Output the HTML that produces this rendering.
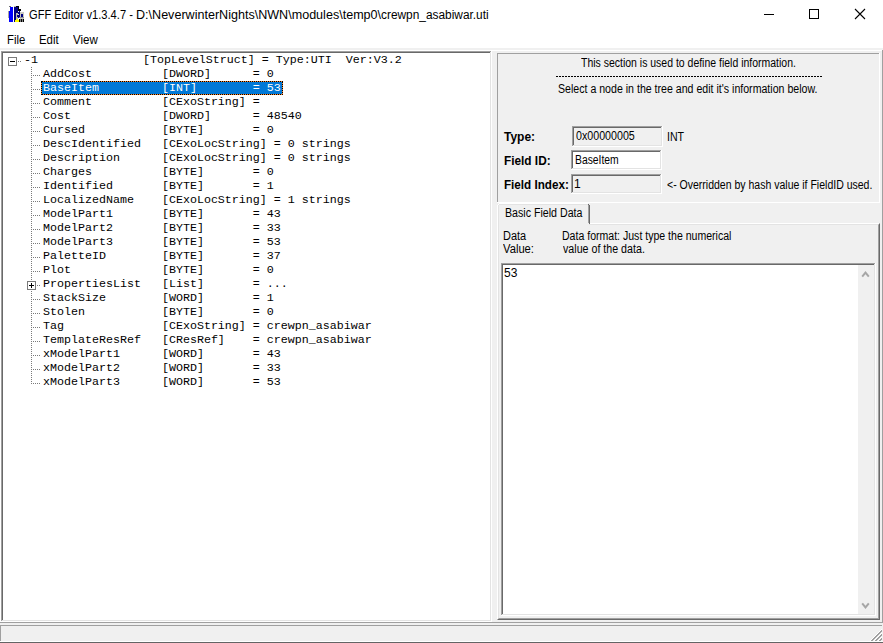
<!DOCTYPE html>
<html><head><meta charset="utf-8">
<style>
*{margin:0;padding:0;box-sizing:border-box}
html,body{width:883px;height:643px;overflow:hidden;background:#fff;position:relative;font-family:"Liberation Sans",sans-serif;color:#000}
.a{position:absolute}
.t{position:absolute;white-space:pre;line-height:1}
.sunken{position:absolute;border-top:1px solid #a0a0a0;border-left:1px solid #a0a0a0;border-right:1px solid #fff;border-bottom:1px solid #fff}
.sunken>.in{position:absolute;left:0;top:0;right:0;bottom:0;border-top:1px solid #696969;border-left:1px solid #696969;border-right:1px solid #e3e3e3;border-bottom:1px solid #e3e3e3}
.tree{font-family:"Liberation Mono",monospace;font-size:11.667px}
.row{position:absolute;height:14px;white-space:pre;line-height:14px}
.selo{position:absolute;background:#ff8728;height:14px}
.sel{background:#0078d7;background-clip:padding-box;color:#fff;padding-left:1px;border:1px dotted #000;line-height:12px;padding-top:0}
.ps{font-size:12px;transform-origin:0 0}
</style></head><body>
<!-- title bar -->
<svg class="a" style="left:8px;top:6px" width="16" height="16" viewBox="0 0 16 16" shape-rendering="crispEdges">
<rect x="0" y="5" width="1" height="7" fill="#a8a8a0"/>
<rect x="1" y="0" width="2" height="1" fill="#707070"/>
<rect x="2" y="1" width="3" height="15" fill="#0000ff"/>
<rect x="1" y="5" width="1" height="11" fill="#0000ff"/>
<rect x="6" y="0" width="2" height="1" fill="#c0c0b0"/>
<rect x="6" y="1" width="4" height="15" fill="#000080"/>
<rect x="8" y="0" width="3" height="1" fill="#000"/>
<rect x="10" y="1" width="1" height="4" fill="#000"/>
<rect x="11" y="3" width="2" height="2" fill="#000"/>
<rect x="10" y="5" width="2" height="7" fill="#000080"/>
<rect x="10" y="5" width="1" height="1" fill="#e0e0ff"/>
<rect x="10" y="8" width="1" height="1" fill="#e0e0ff"/>
<rect x="8" y="7" width="2" height="6" fill="#b8b8b0"/>
<rect x="9" y="9" width="1" height="2" fill="#000080"/>
<rect x="12" y="6" width="4" height="7" fill="#c8c8c0"/>
<rect x="13" y="8" width="2" height="3" fill="#000080"/>
<rect x="11" y="11" width="5" height="1" fill="#909090"/>
<rect x="7" y="14" width="4" height="2" fill="#ffff00"/>
<rect x="8" y="13" width="2" height="1" fill="#ffff00"/>
<rect x="11" y="13" width="5" height="3" fill="#808080"/>
<rect x="11" y="13" width="1" height="3" fill="#000"/>
<rect x="13" y="13" width="1" height="3" fill="#000"/>
<rect x="15" y="13" width="1" height="3" fill="#000"/>
</svg>
<div id="ttl1" class="t" style="left:29px;top:9px;font-size:12px;transform-origin:0 0;transform:scaleX(0.927)">GFF Editor v1.3.4.7 -</div>
<div id="ttl2" class="t" style="left:136px;top:9px;font-size:12px;transform-origin:0 0;transform:scaleX(1.047)">D:\NeverwinterNights\NWN\modules\temp0\</div>
<div id="ttl3" class="t" style="left:381px;top:9px;font-size:12px;transform-origin:0 0;transform:scaleX(0.99)">crewpn_asabiwar.uti</div>
<div class="a" style="left:764px;top:14px;width:10px;height:1px;background:#000"></div>
<div class="a" style="left:809px;top:9px;width:10px;height:10px;border:1px solid #000"></div>
<svg class="a" style="left:854px;top:8px" width="12" height="12" viewBox="0 0 12 12"><path d="M1 1L11 11M11 1L1 11" stroke="#000" stroke-width="1.1"/></svg>
<!-- menu -->
<div id="mf" class="t" style="left:7px;top:34px;font-size:12px;transform-origin:0 0;transform:scaleX(0.944)">File</div>
<div id="me" class="t" style="left:39px;top:34px;font-size:12px;transform-origin:0 0;transform:scaleX(0.95)">Edit</div>
<div id="mv" class="t" style="left:73px;top:34px;font-size:12px;transform-origin:0 0;transform:scaleX(0.96)">View</div>
<div class="a" style="left:0;top:48px;width:883px;height:2px;background:#f0f0f0"></div>
<!-- client bg -->
<div class="a" style="left:492px;top:51px;width:390px;height:571px;background:#f0f0f0"></div>
<div class="a" style="left:882px;top:50px;width:1px;height:573px;background:#a0a0a0"></div>
<div class="a" style="left:0;top:622px;width:883px;height:1px;background:#a0a0a0"></div>
<div class="a" style="left:0;top:623px;width:883px;height:2px;background:#f0f0f0"></div>
<!-- tree -->
<div class="a" style="left:1px;top:51px;width:491px;height:571px;background:#fff"></div>
<div class="a" style="left:1px;top:51px;width:490px;height:1px;background:#a0a0a0"></div>
<div class="a" style="left:1px;top:51px;width:1px;height:570px;background:#a0a0a0"></div>
<div class="a" style="left:1px;top:621px;width:491px;height:1px;background:#fff"></div>
<div class="a" style="left:491px;top:51px;width:1px;height:571px;background:#fff"></div>
<div class="a" style="left:2px;top:52px;width:488px;height:1px;background:#696969"></div>
<div class="a" style="left:2px;top:52px;width:1px;height:568px;background:#696969"></div>
<div class="a" style="left:2px;top:620px;width:489px;height:1px;background:#e3e3e3"></div>
<div class="a" style="left:490px;top:52px;width:1px;height:569px;background:#e3e3e3"></div>
<!--TREE-->
<div class="a tree" style="left:0;top:0;width:492px;height:622px">
<svg class="a" style="left:0;top:0" width="492" height="400" shape-rendering="crispEdges"><rect x="8.5" y="57.5" width="8" height="8" fill="#fff" stroke="#7a7a7a" stroke-width="1"/><rect x="10" y="61" width="5" height="1" fill="#000"/><rect x="18" y="61" width="1" height="1" fill="#7a7a7a"/><rect x="20" y="61" width="1" height="1" fill="#7a7a7a"/><rect x="31" y="67" width="1" height="1" fill="#7a7a7a"/><rect x="31" y="69" width="1" height="1" fill="#7a7a7a"/><rect x="31" y="71" width="1" height="1" fill="#7a7a7a"/><rect x="31" y="73" width="1" height="1" fill="#7a7a7a"/><rect x="31" y="75" width="1" height="1" fill="#7a7a7a"/><rect x="31" y="77" width="1" height="1" fill="#7a7a7a"/><rect x="31" y="79" width="1" height="1" fill="#7a7a7a"/><rect x="31" y="81" width="1" height="1" fill="#7a7a7a"/><rect x="31" y="83" width="1" height="1" fill="#7a7a7a"/><rect x="31" y="85" width="1" height="1" fill="#7a7a7a"/><rect x="31" y="87" width="1" height="1" fill="#7a7a7a"/><rect x="31" y="89" width="1" height="1" fill="#7a7a7a"/><rect x="31" y="91" width="1" height="1" fill="#7a7a7a"/><rect x="31" y="93" width="1" height="1" fill="#7a7a7a"/><rect x="31" y="95" width="1" height="1" fill="#7a7a7a"/><rect x="31" y="97" width="1" height="1" fill="#7a7a7a"/><rect x="31" y="99" width="1" height="1" fill="#7a7a7a"/><rect x="31" y="101" width="1" height="1" fill="#7a7a7a"/><rect x="31" y="103" width="1" height="1" fill="#7a7a7a"/><rect x="31" y="105" width="1" height="1" fill="#7a7a7a"/><rect x="31" y="107" width="1" height="1" fill="#7a7a7a"/><rect x="31" y="109" width="1" height="1" fill="#7a7a7a"/><rect x="31" y="111" width="1" height="1" fill="#7a7a7a"/><rect x="31" y="113" width="1" height="1" fill="#7a7a7a"/><rect x="31" y="115" width="1" height="1" fill="#7a7a7a"/><rect x="31" y="117" width="1" height="1" fill="#7a7a7a"/><rect x="31" y="119" width="1" height="1" fill="#7a7a7a"/><rect x="31" y="121" width="1" height="1" fill="#7a7a7a"/><rect x="31" y="123" width="1" height="1" fill="#7a7a7a"/><rect x="31" y="125" width="1" height="1" fill="#7a7a7a"/><rect x="31" y="127" width="1" height="1" fill="#7a7a7a"/><rect x="31" y="129" width="1" height="1" fill="#7a7a7a"/><rect x="31" y="131" width="1" height="1" fill="#7a7a7a"/><rect x="31" y="133" width="1" height="1" fill="#7a7a7a"/><rect x="31" y="135" width="1" height="1" fill="#7a7a7a"/><rect x="31" y="137" width="1" height="1" fill="#7a7a7a"/><rect x="31" y="139" width="1" height="1" fill="#7a7a7a"/><rect x="31" y="141" width="1" height="1" fill="#7a7a7a"/><rect x="31" y="143" width="1" height="1" fill="#7a7a7a"/><rect x="31" y="145" width="1" height="1" fill="#7a7a7a"/><rect x="31" y="147" width="1" height="1" fill="#7a7a7a"/><rect x="31" y="149" width="1" height="1" fill="#7a7a7a"/><rect x="31" y="151" width="1" height="1" fill="#7a7a7a"/><rect x="31" y="153" width="1" height="1" fill="#7a7a7a"/><rect x="31" y="155" width="1" height="1" fill="#7a7a7a"/><rect x="31" y="157" width="1" height="1" fill="#7a7a7a"/><rect x="31" y="159" width="1" height="1" fill="#7a7a7a"/><rect x="31" y="161" width="1" height="1" fill="#7a7a7a"/><rect x="31" y="163" width="1" height="1" fill="#7a7a7a"/><rect x="31" y="165" width="1" height="1" fill="#7a7a7a"/><rect x="31" y="167" width="1" height="1" fill="#7a7a7a"/><rect x="31" y="169" width="1" height="1" fill="#7a7a7a"/><rect x="31" y="171" width="1" height="1" fill="#7a7a7a"/><rect x="31" y="173" width="1" height="1" fill="#7a7a7a"/><rect x="31" y="175" width="1" height="1" fill="#7a7a7a"/><rect x="31" y="177" width="1" height="1" fill="#7a7a7a"/><rect x="31" y="179" width="1" height="1" fill="#7a7a7a"/><rect x="31" y="181" width="1" height="1" fill="#7a7a7a"/><rect x="31" y="183" width="1" height="1" fill="#7a7a7a"/><rect x="31" y="185" width="1" height="1" fill="#7a7a7a"/><rect x="31" y="187" width="1" height="1" fill="#7a7a7a"/><rect x="31" y="189" width="1" height="1" fill="#7a7a7a"/><rect x="31" y="191" width="1" height="1" fill="#7a7a7a"/><rect x="31" y="193" width="1" height="1" fill="#7a7a7a"/><rect x="31" y="195" width="1" height="1" fill="#7a7a7a"/><rect x="31" y="197" width="1" height="1" fill="#7a7a7a"/><rect x="31" y="199" width="1" height="1" fill="#7a7a7a"/><rect x="31" y="201" width="1" height="1" fill="#7a7a7a"/><rect x="31" y="203" width="1" height="1" fill="#7a7a7a"/><rect x="31" y="205" width="1" height="1" fill="#7a7a7a"/><rect x="31" y="207" width="1" height="1" fill="#7a7a7a"/><rect x="31" y="209" width="1" height="1" fill="#7a7a7a"/><rect x="31" y="211" width="1" height="1" fill="#7a7a7a"/><rect x="31" y="213" width="1" height="1" fill="#7a7a7a"/><rect x="31" y="215" width="1" height="1" fill="#7a7a7a"/><rect x="31" y="217" width="1" height="1" fill="#7a7a7a"/><rect x="31" y="219" width="1" height="1" fill="#7a7a7a"/><rect x="31" y="221" width="1" height="1" fill="#7a7a7a"/><rect x="31" y="223" width="1" height="1" fill="#7a7a7a"/><rect x="31" y="225" width="1" height="1" fill="#7a7a7a"/><rect x="31" y="227" width="1" height="1" fill="#7a7a7a"/><rect x="31" y="229" width="1" height="1" fill="#7a7a7a"/><rect x="31" y="231" width="1" height="1" fill="#7a7a7a"/><rect x="31" y="233" width="1" height="1" fill="#7a7a7a"/><rect x="31" y="235" width="1" height="1" fill="#7a7a7a"/><rect x="31" y="237" width="1" height="1" fill="#7a7a7a"/><rect x="31" y="239" width="1" height="1" fill="#7a7a7a"/><rect x="31" y="241" width="1" height="1" fill="#7a7a7a"/><rect x="31" y="243" width="1" height="1" fill="#7a7a7a"/><rect x="31" y="245" width="1" height="1" fill="#7a7a7a"/><rect x="31" y="247" width="1" height="1" fill="#7a7a7a"/><rect x="31" y="249" width="1" height="1" fill="#7a7a7a"/><rect x="31" y="251" width="1" height="1" fill="#7a7a7a"/><rect x="31" y="253" width="1" height="1" fill="#7a7a7a"/><rect x="31" y="255" width="1" height="1" fill="#7a7a7a"/><rect x="31" y="257" width="1" height="1" fill="#7a7a7a"/><rect x="31" y="259" width="1" height="1" fill="#7a7a7a"/><rect x="31" y="261" width="1" height="1" fill="#7a7a7a"/><rect x="31" y="263" width="1" height="1" fill="#7a7a7a"/><rect x="31" y="265" width="1" height="1" fill="#7a7a7a"/><rect x="31" y="267" width="1" height="1" fill="#7a7a7a"/><rect x="31" y="269" width="1" height="1" fill="#7a7a7a"/><rect x="31" y="271" width="1" height="1" fill="#7a7a7a"/><rect x="31" y="273" width="1" height="1" fill="#7a7a7a"/><rect x="31" y="275" width="1" height="1" fill="#7a7a7a"/><rect x="31" y="277" width="1" height="1" fill="#7a7a7a"/><rect x="31" y="279" width="1" height="1" fill="#7a7a7a"/><rect x="31" y="291" width="1" height="1" fill="#7a7a7a"/><rect x="31" y="293" width="1" height="1" fill="#7a7a7a"/><rect x="31" y="295" width="1" height="1" fill="#7a7a7a"/><rect x="31" y="297" width="1" height="1" fill="#7a7a7a"/><rect x="31" y="299" width="1" height="1" fill="#7a7a7a"/><rect x="31" y="301" width="1" height="1" fill="#7a7a7a"/><rect x="31" y="303" width="1" height="1" fill="#7a7a7a"/><rect x="31" y="305" width="1" height="1" fill="#7a7a7a"/><rect x="31" y="307" width="1" height="1" fill="#7a7a7a"/><rect x="31" y="309" width="1" height="1" fill="#7a7a7a"/><rect x="31" y="311" width="1" height="1" fill="#7a7a7a"/><rect x="31" y="313" width="1" height="1" fill="#7a7a7a"/><rect x="31" y="315" width="1" height="1" fill="#7a7a7a"/><rect x="31" y="317" width="1" height="1" fill="#7a7a7a"/><rect x="31" y="319" width="1" height="1" fill="#7a7a7a"/><rect x="31" y="321" width="1" height="1" fill="#7a7a7a"/><rect x="31" y="323" width="1" height="1" fill="#7a7a7a"/><rect x="31" y="325" width="1" height="1" fill="#7a7a7a"/><rect x="31" y="327" width="1" height="1" fill="#7a7a7a"/><rect x="31" y="329" width="1" height="1" fill="#7a7a7a"/><rect x="31" y="331" width="1" height="1" fill="#7a7a7a"/><rect x="31" y="333" width="1" height="1" fill="#7a7a7a"/><rect x="31" y="335" width="1" height="1" fill="#7a7a7a"/><rect x="31" y="337" width="1" height="1" fill="#7a7a7a"/><rect x="31" y="339" width="1" height="1" fill="#7a7a7a"/><rect x="31" y="341" width="1" height="1" fill="#7a7a7a"/><rect x="31" y="343" width="1" height="1" fill="#7a7a7a"/><rect x="31" y="345" width="1" height="1" fill="#7a7a7a"/><rect x="31" y="347" width="1" height="1" fill="#7a7a7a"/><rect x="31" y="349" width="1" height="1" fill="#7a7a7a"/><rect x="31" y="351" width="1" height="1" fill="#7a7a7a"/><rect x="31" y="353" width="1" height="1" fill="#7a7a7a"/><rect x="31" y="355" width="1" height="1" fill="#7a7a7a"/><rect x="31" y="357" width="1" height="1" fill="#7a7a7a"/><rect x="31" y="359" width="1" height="1" fill="#7a7a7a"/><rect x="31" y="361" width="1" height="1" fill="#7a7a7a"/><rect x="31" y="363" width="1" height="1" fill="#7a7a7a"/><rect x="31" y="365" width="1" height="1" fill="#7a7a7a"/><rect x="31" y="367" width="1" height="1" fill="#7a7a7a"/><rect x="31" y="369" width="1" height="1" fill="#7a7a7a"/><rect x="31" y="371" width="1" height="1" fill="#7a7a7a"/><rect x="31" y="373" width="1" height="1" fill="#7a7a7a"/><rect x="31" y="375" width="1" height="1" fill="#7a7a7a"/><rect x="31" y="377" width="1" height="1" fill="#7a7a7a"/><rect x="31" y="379" width="1" height="1" fill="#7a7a7a"/><rect x="31" y="381" width="1" height="1" fill="#7a7a7a"/><rect x="31" y="383" width="1" height="1" fill="#7a7a7a"/><rect x="33" y="75" width="1" height="1" fill="#7a7a7a"/><rect x="35" y="75" width="1" height="1" fill="#7a7a7a"/><rect x="37" y="75" width="1" height="1" fill="#7a7a7a"/><rect x="39" y="75" width="1" height="1" fill="#7a7a7a"/><rect x="33" y="89" width="1" height="1" fill="#7a7a7a"/><rect x="35" y="89" width="1" height="1" fill="#7a7a7a"/><rect x="37" y="89" width="1" height="1" fill="#7a7a7a"/><rect x="39" y="89" width="1" height="1" fill="#7a7a7a"/><rect x="33" y="103" width="1" height="1" fill="#7a7a7a"/><rect x="35" y="103" width="1" height="1" fill="#7a7a7a"/><rect x="37" y="103" width="1" height="1" fill="#7a7a7a"/><rect x="39" y="103" width="1" height="1" fill="#7a7a7a"/><rect x="33" y="117" width="1" height="1" fill="#7a7a7a"/><rect x="35" y="117" width="1" height="1" fill="#7a7a7a"/><rect x="37" y="117" width="1" height="1" fill="#7a7a7a"/><rect x="39" y="117" width="1" height="1" fill="#7a7a7a"/><rect x="33" y="131" width="1" height="1" fill="#7a7a7a"/><rect x="35" y="131" width="1" height="1" fill="#7a7a7a"/><rect x="37" y="131" width="1" height="1" fill="#7a7a7a"/><rect x="39" y="131" width="1" height="1" fill="#7a7a7a"/><rect x="33" y="145" width="1" height="1" fill="#7a7a7a"/><rect x="35" y="145" width="1" height="1" fill="#7a7a7a"/><rect x="37" y="145" width="1" height="1" fill="#7a7a7a"/><rect x="39" y="145" width="1" height="1" fill="#7a7a7a"/><rect x="33" y="159" width="1" height="1" fill="#7a7a7a"/><rect x="35" y="159" width="1" height="1" fill="#7a7a7a"/><rect x="37" y="159" width="1" height="1" fill="#7a7a7a"/><rect x="39" y="159" width="1" height="1" fill="#7a7a7a"/><rect x="33" y="173" width="1" height="1" fill="#7a7a7a"/><rect x="35" y="173" width="1" height="1" fill="#7a7a7a"/><rect x="37" y="173" width="1" height="1" fill="#7a7a7a"/><rect x="39" y="173" width="1" height="1" fill="#7a7a7a"/><rect x="33" y="187" width="1" height="1" fill="#7a7a7a"/><rect x="35" y="187" width="1" height="1" fill="#7a7a7a"/><rect x="37" y="187" width="1" height="1" fill="#7a7a7a"/><rect x="39" y="187" width="1" height="1" fill="#7a7a7a"/><rect x="33" y="201" width="1" height="1" fill="#7a7a7a"/><rect x="35" y="201" width="1" height="1" fill="#7a7a7a"/><rect x="37" y="201" width="1" height="1" fill="#7a7a7a"/><rect x="39" y="201" width="1" height="1" fill="#7a7a7a"/><rect x="33" y="215" width="1" height="1" fill="#7a7a7a"/><rect x="35" y="215" width="1" height="1" fill="#7a7a7a"/><rect x="37" y="215" width="1" height="1" fill="#7a7a7a"/><rect x="39" y="215" width="1" height="1" fill="#7a7a7a"/><rect x="33" y="229" width="1" height="1" fill="#7a7a7a"/><rect x="35" y="229" width="1" height="1" fill="#7a7a7a"/><rect x="37" y="229" width="1" height="1" fill="#7a7a7a"/><rect x="39" y="229" width="1" height="1" fill="#7a7a7a"/><rect x="33" y="243" width="1" height="1" fill="#7a7a7a"/><rect x="35" y="243" width="1" height="1" fill="#7a7a7a"/><rect x="37" y="243" width="1" height="1" fill="#7a7a7a"/><rect x="39" y="243" width="1" height="1" fill="#7a7a7a"/><rect x="33" y="257" width="1" height="1" fill="#7a7a7a"/><rect x="35" y="257" width="1" height="1" fill="#7a7a7a"/><rect x="37" y="257" width="1" height="1" fill="#7a7a7a"/><rect x="39" y="257" width="1" height="1" fill="#7a7a7a"/><rect x="33" y="271" width="1" height="1" fill="#7a7a7a"/><rect x="35" y="271" width="1" height="1" fill="#7a7a7a"/><rect x="37" y="271" width="1" height="1" fill="#7a7a7a"/><rect x="39" y="271" width="1" height="1" fill="#7a7a7a"/><rect x="27.5" y="281.5" width="8" height="8" fill="#fff" stroke="#7a7a7a" stroke-width="1"/><rect x="29" y="285" width="5" height="1" fill="#000"/><rect x="31" y="283" width="1" height="5" fill="#000"/><rect x="37" y="285" width="1" height="1" fill="#7a7a7a"/><rect x="39" y="285" width="1" height="1" fill="#7a7a7a"/><rect x="33" y="299" width="1" height="1" fill="#7a7a7a"/><rect x="35" y="299" width="1" height="1" fill="#7a7a7a"/><rect x="37" y="299" width="1" height="1" fill="#7a7a7a"/><rect x="39" y="299" width="1" height="1" fill="#7a7a7a"/><rect x="33" y="313" width="1" height="1" fill="#7a7a7a"/><rect x="35" y="313" width="1" height="1" fill="#7a7a7a"/><rect x="37" y="313" width="1" height="1" fill="#7a7a7a"/><rect x="39" y="313" width="1" height="1" fill="#7a7a7a"/><rect x="33" y="327" width="1" height="1" fill="#7a7a7a"/><rect x="35" y="327" width="1" height="1" fill="#7a7a7a"/><rect x="37" y="327" width="1" height="1" fill="#7a7a7a"/><rect x="39" y="327" width="1" height="1" fill="#7a7a7a"/><rect x="33" y="341" width="1" height="1" fill="#7a7a7a"/><rect x="35" y="341" width="1" height="1" fill="#7a7a7a"/><rect x="37" y="341" width="1" height="1" fill="#7a7a7a"/><rect x="39" y="341" width="1" height="1" fill="#7a7a7a"/><rect x="33" y="355" width="1" height="1" fill="#7a7a7a"/><rect x="35" y="355" width="1" height="1" fill="#7a7a7a"/><rect x="37" y="355" width="1" height="1" fill="#7a7a7a"/><rect x="39" y="355" width="1" height="1" fill="#7a7a7a"/><rect x="33" y="369" width="1" height="1" fill="#7a7a7a"/><rect x="35" y="369" width="1" height="1" fill="#7a7a7a"/><rect x="37" y="369" width="1" height="1" fill="#7a7a7a"/><rect x="39" y="369" width="1" height="1" fill="#7a7a7a"/><rect x="33" y="383" width="1" height="1" fill="#7a7a7a"/><rect x="35" y="383" width="1" height="1" fill="#7a7a7a"/><rect x="37" y="383" width="1" height="1" fill="#7a7a7a"/><rect x="39" y="383" width="1" height="1" fill="#7a7a7a"/></svg>
<div class="row" style="left:24px;top:53px">-1               [TopLevelStruct] = Type:UTI  Ver:V3.2</div>
<div class="row" style="left:43px;top:67px">AddCost          [DWORD]      = 0</div>
<div class="selo" style="left:41px;top:81px;width:242px"></div><div class="row sel" style="left:41px;top:81px;width:242px">BaseItem         [INT]        = 53</div>
<div class="row" style="left:43px;top:95px">Comment          [CExoString] =</div>
<div class="row" style="left:43px;top:109px">Cost             [DWORD]      = 48540</div>
<div class="row" style="left:43px;top:123px">Cursed           [BYTE]       = 0</div>
<div class="row" style="left:43px;top:137px">DescIdentified   [CExoLocString] = 0 strings</div>
<div class="row" style="left:43px;top:151px">Description      [CExoLocString] = 0 strings</div>
<div class="row" style="left:43px;top:165px">Charges          [BYTE]       = 0</div>
<div class="row" style="left:43px;top:179px">Identified       [BYTE]       = 1</div>
<div class="row" style="left:43px;top:193px">LocalizedName    [CExoLocString] = 1 strings</div>
<div class="row" style="left:43px;top:207px">ModelPart1       [BYTE]       = 43</div>
<div class="row" style="left:43px;top:221px">ModelPart2       [BYTE]       = 33</div>
<div class="row" style="left:43px;top:235px">ModelPart3       [BYTE]       = 53</div>
<div class="row" style="left:43px;top:249px">PaletteID        [BYTE]       = 37</div>
<div class="row" style="left:43px;top:263px">Plot             [BYTE]       = 0</div>
<div class="row" style="left:43px;top:277px">PropertiesList   [List]       = ...</div>
<div class="row" style="left:43px;top:291px">StackSize        [WORD]       = 1</div>
<div class="row" style="left:43px;top:305px">Stolen           [BYTE]       = 0</div>
<div class="row" style="left:43px;top:319px">Tag              [CExoString] = crewpn_asabiwar</div>
<div class="row" style="left:43px;top:333px">TemplateResRef   [CResRef]    = crewpn_asabiwar</div>
<div class="row" style="left:43px;top:347px">xModelPart1      [WORD]       = 43</div>
<div class="row" style="left:43px;top:361px">xModelPart2      [WORD]       = 33</div>
<div class="row" style="left:43px;top:375px">xModelPart3      [WORD]       = 53</div>
</div>
<!--/TREE-->
<!-- right pane top static -->
<div class="a" style="left:497px;top:53px;width:382px;height:1px;background:#a0a0a0"></div>
<div class="a" style="left:497px;top:53px;width:1px;height:149px;background:#a0a0a0"></div>
<div class="a" style="left:497px;top:202px;width:383px;height:1px;background:#fff"></div>
<div class="a" style="left:879px;top:53px;width:1px;height:150px;background:#fff"></div>
<div id="s1" class="t ps" style="left:581px;top:57px;transform:scaleX(0.873)">This section is used to define field information.</div>
<div class="a" style="left:556px;top:76px;width:266px;height:1px;background:repeating-linear-gradient(90deg,#000 0 2px,transparent 2px 3px)"></div>
<div id="s2" class="t ps" style="left:558px;top:83px;transform:scaleX(0.883)">Select a node in the tree and edit it's information below.</div>
<div id="lt" class="t" style="left:504px;top:131px;font-size:12px;font-weight:bold;transform-origin:0 0">Type:</div>
<div id="lfi" class="t" style="left:504px;top:155px;font-size:12px;font-weight:bold;transform-origin:0 0;transform:scaleX(0.985)">Field ID:</div>
<div id="lfx" class="t" style="left:504px;top:179px;font-size:12px;font-weight:bold;transform-origin:0 0;transform:scaleX(0.972)">Field Index:</div>
<div class="a" style="left:572px;top:126px;width:91px;height:21px;background:#f0f0f0"></div>
<div class="a" style="left:572px;top:126px;width:90px;height:1px;background:#a0a0a0"></div>
<div class="a" style="left:572px;top:126px;width:1px;height:20px;background:#a0a0a0"></div>
<div class="a" style="left:572px;top:146px;width:91px;height:1px;background:#fff"></div>
<div class="a" style="left:662px;top:126px;width:1px;height:21px;background:#fff"></div>
<div class="a" style="left:573px;top:127px;width:88px;height:1px;background:#696969"></div>
<div class="a" style="left:573px;top:127px;width:1px;height:18px;background:#696969"></div>
<div class="a" style="left:573px;top:145px;width:89px;height:1px;background:#e3e3e3"></div>
<div class="a" style="left:661px;top:127px;width:1px;height:19px;background:#e3e3e3"></div>
<div id="vt" class="t ps" style="left:576px;top:130px;transform:scaleX(0.89)">0x00000005</div>
<div id="vint" class="t ps" style="left:667px;top:131px;transform:scaleX(0.885)">INT</div>
<div class="a" style="left:571px;top:150px;width:91px;height:20px;background:#fff"></div>
<div class="a" style="left:571px;top:150px;width:90px;height:1px;background:#a0a0a0"></div>
<div class="a" style="left:571px;top:150px;width:1px;height:19px;background:#a0a0a0"></div>
<div class="a" style="left:571px;top:169px;width:91px;height:1px;background:#fff"></div>
<div class="a" style="left:661px;top:150px;width:1px;height:20px;background:#fff"></div>
<div class="a" style="left:572px;top:151px;width:88px;height:1px;background:#696969"></div>
<div class="a" style="left:572px;top:151px;width:1px;height:17px;background:#696969"></div>
<div class="a" style="left:572px;top:168px;width:89px;height:1px;background:#e3e3e3"></div>
<div class="a" style="left:660px;top:151px;width:1px;height:18px;background:#e3e3e3"></div>
<div id="vid" class="t ps" style="left:575px;top:154px;transform:scaleX(0.862)">BaseItem</div>
<div class="a" style="left:571px;top:174px;width:91px;height:20px;background:#f0f0f0"></div>
<div class="a" style="left:571px;top:174px;width:90px;height:1px;background:#a0a0a0"></div>
<div class="a" style="left:571px;top:174px;width:1px;height:19px;background:#a0a0a0"></div>
<div class="a" style="left:571px;top:193px;width:91px;height:1px;background:#fff"></div>
<div class="a" style="left:661px;top:174px;width:1px;height:20px;background:#fff"></div>
<div class="a" style="left:572px;top:175px;width:88px;height:1px;background:#696969"></div>
<div class="a" style="left:572px;top:175px;width:1px;height:17px;background:#696969"></div>
<div class="a" style="left:572px;top:192px;width:89px;height:1px;background:#e3e3e3"></div>
<div class="a" style="left:660px;top:175px;width:1px;height:18px;background:#e3e3e3"></div>
<div id="vidx" class="t ps" style="left:574px;top:178px">1</div>
<div id="ovr" class="t ps" style="left:667px;top:179px;transform:scaleX(0.876)">&lt;- Overridden by hash value if FieldID used.</div>
<!-- tab -->
<div class="a" style="left:497px;top:223px;width:383px;height:397px;border-top:1px solid #fff;border-left:1px solid #fff;border-right:1px solid #696969;border-bottom:1px solid #696969"></div>
<div class="a" style="left:498px;top:224px;width:381px;height:395px;border-top:1px solid #e3e3e3;border-left:1px solid #e3e3e3;border-right:1px solid #a0a0a0;border-bottom:1px solid #a0a0a0"></div>
<div class="a" style="left:497px;top:203px;width:92px;height:22px;background:#f0f0f0"></div>
<div class="a" style="left:499px;top:203px;width:89px;height:1px;background:#fff"></div>
<div class="a" style="left:499px;top:204px;width:89px;height:1px;background:#e3e3e3"></div>
<div class="a" style="left:498px;top:204px;width:1px;height:1px;background:#fff"></div>
<div class="a" style="left:497px;top:205px;width:1px;height:20px;background:#fff"></div>
<div class="a" style="left:498px;top:205px;width:1px;height:20px;background:#e3e3e3"></div>
<div class="a" style="left:588px;top:204px;width:1px;height:1px;background:#696969"></div>
<div class="a" style="left:589px;top:205px;width:1px;height:19px;background:#696969"></div>
<div class="a" style="left:588px;top:205px;width:1px;height:18px;background:#a0a0a0"></div>
<div id="tab" class="t ps" style="left:505px;top:207px;transform:scaleX(0.886)">Basic Field Data</div>
<div id="dd" class="t ps" style="left:503px;top:230px;transform:scaleX(0.913)">Data</div>
<div id="dv" class="t ps" style="left:503px;top:243px;transform:scaleX(0.935)">Value:</div>
<div id="df1" class="t ps" style="left:562px;top:230px;transform:scaleX(0.879)">Data format: Just type the numerical</div>
<div id="df2" class="t ps" style="left:563px;top:243px;transform:scaleX(0.889)">value of the data.</div>
<div class="a" style="left:501px;top:263px;width:375px;height:353px;background:#fff"></div>
<div class="a" style="left:501px;top:263px;width:374px;height:1px;background:#a0a0a0"></div>
<div class="a" style="left:501px;top:263px;width:1px;height:352px;background:#a0a0a0"></div>
<div class="a" style="left:501px;top:615px;width:375px;height:1px;background:#fff"></div>
<div class="a" style="left:875px;top:263px;width:1px;height:353px;background:#fff"></div>
<div class="a" style="left:502px;top:264px;width:372px;height:1px;background:#696969"></div>
<div class="a" style="left:502px;top:264px;width:1px;height:350px;background:#696969"></div>
<div class="a" style="left:502px;top:614px;width:373px;height:1px;background:#e3e3e3"></div>
<div class="a" style="left:874px;top:264px;width:1px;height:351px;background:#e3e3e3"></div>
<div id="v53" class="t ps" style="left:504px;top:267px">53</div>
<div class="a" style="left:858px;top:265px;width:16px;height:349px;background:#f0f0f0"></div>
<svg class="a" style="left:861px;top:270px" width="9" height="8" viewBox="0 0 9 8"><path d="M1.2 6.6L4.5 2.6L7.8 6.6" stroke="#a6a6a6" stroke-width="2" fill="none" stroke-linejoin="miter"/></svg>
<svg class="a" style="left:861px;top:602px" width="9" height="8" viewBox="0 0 9 8"><path d="M1.2 1.4L4.5 5.4L7.8 1.4" stroke="#a6a6a6" stroke-width="2" fill="none" stroke-linejoin="miter"/></svg>
<!-- status bar -->
<div class="a" style="left:0;top:625px;width:883px;height:18px;background:#f0f0f0;border-top:1px solid #a0a0a0;border-left:1px solid #a0a0a0"></div>
<div class="a" style="left:0;top:641px;width:883px;height:1px;background:#fff"></div>
<div class="a" style="left:0;top:642px;width:883px;height:1px;background:#646464"></div>
<svg class="a" style="left:866px;top:626px" width="16" height="15" shape-rendering="crispEdges"><rect x="4" y="14" width="1" height="1" fill="#fff"/><rect x="5" y="13" width="1" height="1" fill="#fff"/><rect x="5" y="14" width="1" height="1" fill="#a0a0a0"/><rect x="6" y="12" width="1" height="1" fill="#fff"/><rect x="6" y="13" width="1" height="1" fill="#a0a0a0"/><rect x="6" y="14" width="1" height="1" fill="#a0a0a0"/><rect x="7" y="11" width="1" height="1" fill="#fff"/><rect x="7" y="12" width="1" height="1" fill="#a0a0a0"/><rect x="7" y="13" width="1" height="1" fill="#a0a0a0"/><rect x="8" y="10" width="1" height="1" fill="#fff"/><rect x="8" y="11" width="1" height="1" fill="#a0a0a0"/><rect x="8" y="12" width="1" height="1" fill="#a0a0a0"/><rect x="9" y="9" width="1" height="1" fill="#fff"/><rect x="9" y="10" width="1" height="1" fill="#a0a0a0"/><rect x="9" y="11" width="1" height="1" fill="#a0a0a0"/><rect x="10" y="8" width="1" height="1" fill="#fff"/><rect x="10" y="9" width="1" height="1" fill="#a0a0a0"/><rect x="10" y="10" width="1" height="1" fill="#a0a0a0"/><rect x="11" y="7" width="1" height="1" fill="#fff"/><rect x="11" y="8" width="1" height="1" fill="#a0a0a0"/><rect x="11" y="9" width="1" height="1" fill="#a0a0a0"/><rect x="12" y="6" width="1" height="1" fill="#fff"/><rect x="12" y="7" width="1" height="1" fill="#a0a0a0"/><rect x="12" y="8" width="1" height="1" fill="#a0a0a0"/><rect x="13" y="5" width="1" height="1" fill="#fff"/><rect x="13" y="6" width="1" height="1" fill="#a0a0a0"/><rect x="13" y="7" width="1" height="1" fill="#a0a0a0"/><rect x="14" y="4" width="1" height="1" fill="#fff"/><rect x="14" y="5" width="1" height="1" fill="#a0a0a0"/><rect x="14" y="6" width="1" height="1" fill="#a0a0a0"/><rect x="15" y="3" width="1" height="1" fill="#fff"/><rect x="15" y="4" width="1" height="1" fill="#a0a0a0"/><rect x="15" y="5" width="1" height="1" fill="#a0a0a0"/><rect x="8" y="14" width="1" height="1" fill="#fff"/><rect x="9" y="13" width="1" height="1" fill="#fff"/><rect x="9" y="14" width="1" height="1" fill="#a0a0a0"/><rect x="10" y="12" width="1" height="1" fill="#fff"/><rect x="10" y="13" width="1" height="1" fill="#a0a0a0"/><rect x="10" y="14" width="1" height="1" fill="#a0a0a0"/><rect x="11" y="11" width="1" height="1" fill="#fff"/><rect x="11" y="12" width="1" height="1" fill="#a0a0a0"/><rect x="11" y="13" width="1" height="1" fill="#a0a0a0"/><rect x="12" y="10" width="1" height="1" fill="#fff"/><rect x="12" y="11" width="1" height="1" fill="#a0a0a0"/><rect x="12" y="12" width="1" height="1" fill="#a0a0a0"/><rect x="13" y="9" width="1" height="1" fill="#fff"/><rect x="13" y="10" width="1" height="1" fill="#a0a0a0"/><rect x="13" y="11" width="1" height="1" fill="#a0a0a0"/><rect x="14" y="8" width="1" height="1" fill="#fff"/><rect x="14" y="9" width="1" height="1" fill="#a0a0a0"/><rect x="14" y="10" width="1" height="1" fill="#a0a0a0"/><rect x="15" y="7" width="1" height="1" fill="#fff"/><rect x="15" y="8" width="1" height="1" fill="#a0a0a0"/><rect x="15" y="9" width="1" height="1" fill="#a0a0a0"/><rect x="12" y="14" width="1" height="1" fill="#fff"/><rect x="13" y="13" width="1" height="1" fill="#fff"/><rect x="13" y="14" width="1" height="1" fill="#a0a0a0"/><rect x="14" y="12" width="1" height="1" fill="#fff"/><rect x="14" y="13" width="1" height="1" fill="#a0a0a0"/><rect x="14" y="14" width="1" height="1" fill="#a0a0a0"/><rect x="15" y="11" width="1" height="1" fill="#fff"/><rect x="15" y="12" width="1" height="1" fill="#a0a0a0"/><rect x="15" y="13" width="1" height="1" fill="#a0a0a0"/></svg>
<div class="a" style="left:882px;top:625px;width:1px;height:16px;background:#f0f0f0"></div>

</body></html>
